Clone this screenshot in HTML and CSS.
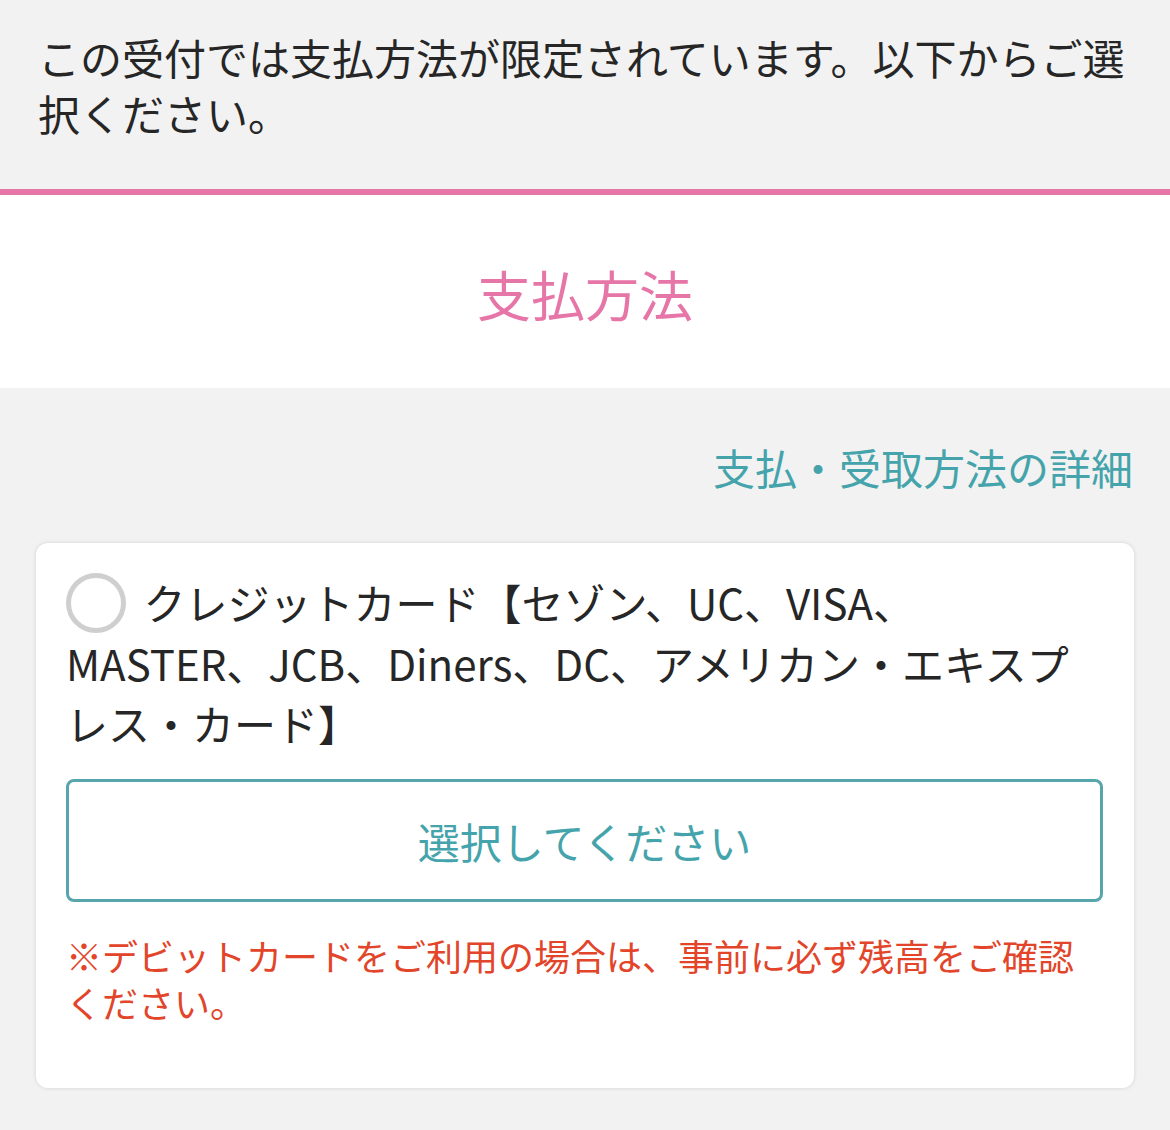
FILE: index.html
```html
<!DOCTYPE html>
<html lang="ja">
<head>
<meta charset="utf-8">
<title>支払方法</title>
<link rel="stylesheet" href="styles.css">
</head>
<body>
<div class="notice">この受付では支払方法が限定されています。以下からご選択ください。</div>
<div class="heading"><h1 class="heading-title">支払方法</h1></div>
<div class="detail-row"><a class="detail-link" href="#">支払・受取方法の詳細</a></div>
<div class="card">
  <label class="option"><span class="radio"></span> クレジットカード【セゾン、UC、VISA、<br>MASTER、JCB、Diners、DC、アメリカン・エキスプレス・カード】</label>
  <button class="select-btn" type="button">選択してください</button>
  <p class="note">※デビットカードをご利用の場合は、事前に必ず残高をご確認<br>ください。</p>
</div>
</body>
</html>
```
FILE: styles.css
```css
html, body {
  margin: 0;
  padding: 0;
}
body {
  background: #f2f2f2;
  font-family: "Noto Sans CJK JP", "Noto Sans", sans-serif;
  color: #262626;
  width: 1170px;
  height: 1130px;
  overflow: hidden;
}
.notice {
  font-size: 42px;
  line-height: 56px;
  padding: 29px 38px 48px;
  border-bottom: 6px solid #e676a8;
}
.heading {
  background: #fff;
  height: 193px;
  display: flex;
  align-items: center;
  justify-content: center;
}
.heading-title {
  margin: 0;
  font-weight: normal;
  font-size: 54px;
  line-height: 1.4;
  color: #e676a8;
  padding-top: 4px;
}
.detail-row {
  text-align: right;
  padding: 49px 37px 0;
  font-size: 42px;
  line-height: 60px;
}
.detail-link {
  color: #45a4ab;
  text-decoration: none;
}
.card {
  margin: 46px 36px 0;
  background: #fff;
  border-radius: 12px;
  box-shadow: 0 0 4px rgba(0, 0, 0, 0.13);
  padding: 29px 31px 62px 30px;
}
.option {
  display: block;
  font-size: 42px;
  line-height: 60px;
  color: #262626;
}
.radio {
  display: inline-block;
  box-sizing: border-box;
  width: 60px;
  height: 60px;
  border: 5px solid #cfcfcf;
  border-radius: 50%;
  vertical-align: top;
  margin-top: 1px;
  margin-right: 8px;
}
.select-btn {
  display: block;
  box-sizing: border-box;
  width: 100%;
  height: 123px;
  margin-top: 26px;
  background: #fff;
  border: 3px solid #56a6ac;
  border-radius: 8px;
  font-family: inherit;
  font-size: 42px;
  line-height: 60px;
  color: #45a4ab;
  cursor: pointer;
}
.note {
  margin: 30px -12px 0 0;
  font-size: 36px;
  line-height: 47px;
  color: #e2452a;
}
```
